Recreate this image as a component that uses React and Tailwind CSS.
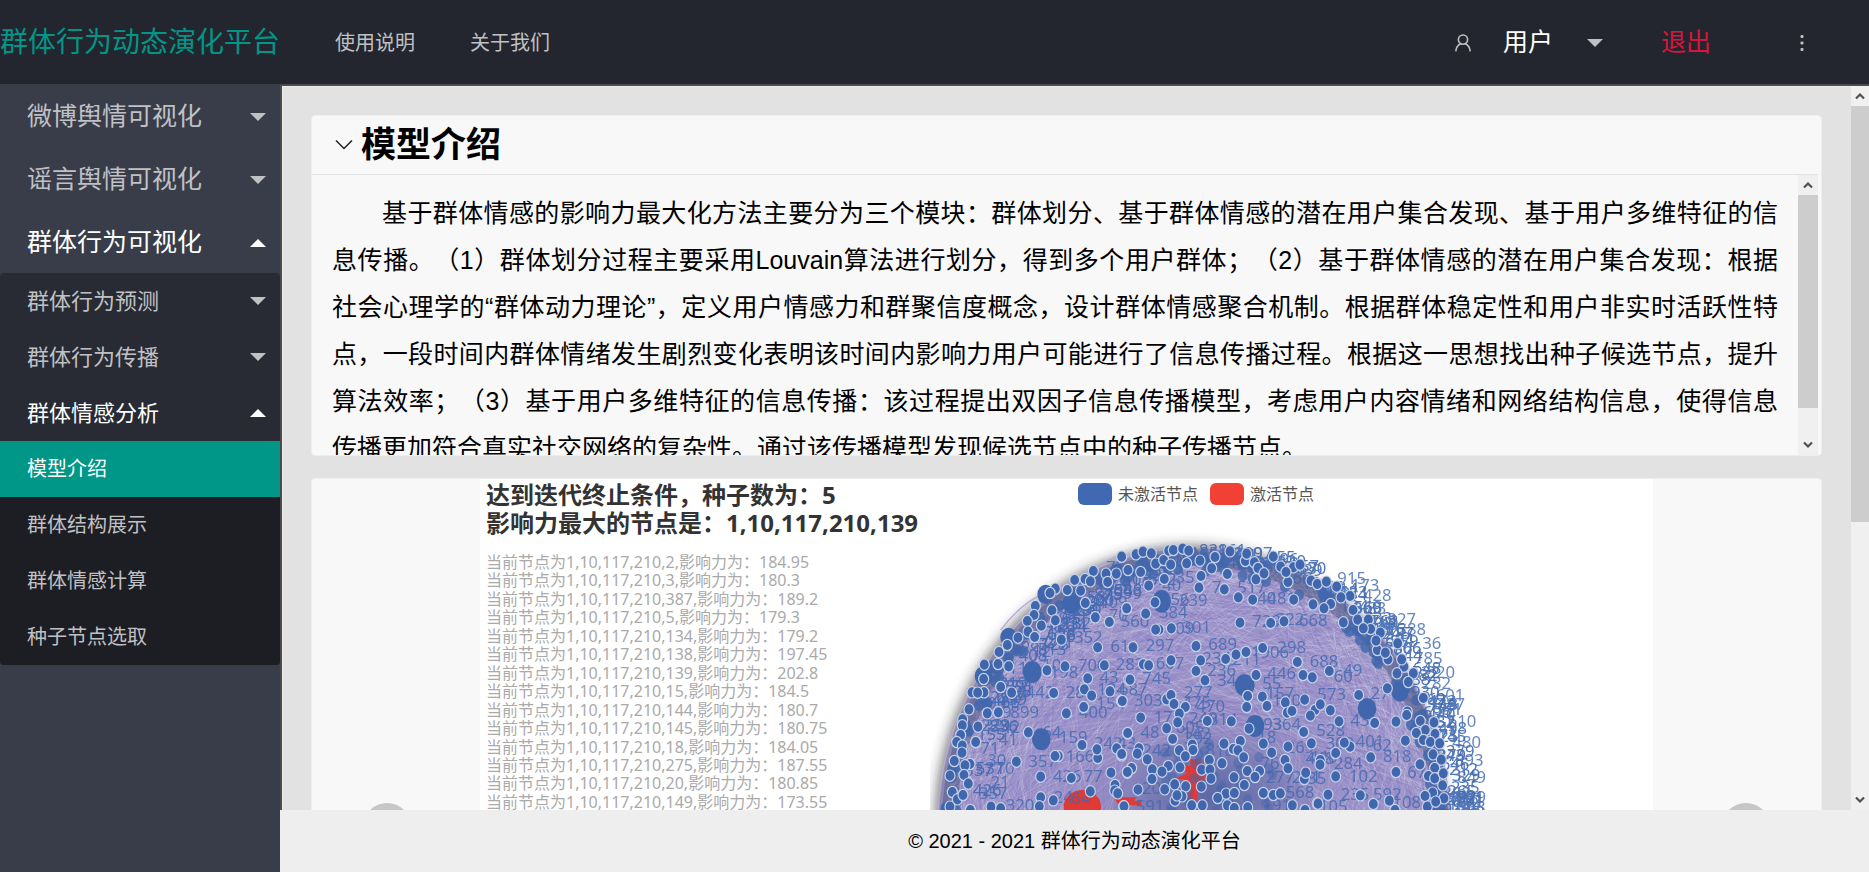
import React from "react";

/* ---------- propagation graph data (three graph units per pixel) ---------- */
const BLOCKS = [
  {
    dx: 0,
    nodes: [[575,80],[490,123],[528,131],[559,131],[533,156],[465,147],[481,154],[434,150],[452,182],[376,176],[412,180],[360,189],[466,219],[496,262],[538,276],[590,235],[366,241],[316,228],[312,255],[292,273],[376,271],[334,287],[294,305],[314,321],[264,323],[232,345],[394,329],[207,366],[163,404],[204,402],[236,409],[161,447],[351,421],[405,409],[503,352],[523,406],[473,445],[463,478],[485,497],[461,531],[540,484],[574,513],[126,487],[162,487],[143,488],[212,471],[245,488],[371,489],[117,538],[172,550],[205,547],[409,550],[98,568],[97,586],[144,590],[137,636],[92,615],[80,636],[97,647],[295,607],[96,668],[73,693],[120,702],[105,706],[259,695],[60,737],[102,735],[115,761],[385,678],[375,678],[456,645],[503,684],[501,658],[575,676],[560,655],[543,728],[592,728],[593,610],[332,740],[424,744],[67,786],[82,808],[99,795],[332,802],[370,811],[481,784],[555,765],[554,782],[563,790],[183,830],[212,835],[328,829],[581,829],[121,840],[60,830],[596,448]],
    hubs: [[347,193,25,29],[424,220,27,30],[236,322,25,29],[161,438,27,30],[307,426,28,33],[334,628,28,33],[50,835,18,20]],
    labels: [["409",550,217],["54",500,217],["352",475,322],["6",422,318],["700",487,405],["198",402,425],["10",365,405],["442",330,487],["80",262,487],["43",537,440],["28",436,487],["899",284,546],["9",230,546],["42",242,590],["41",235,628],["64",365,606],["159",430,622],["357",338,693],["426",412,738],["77",490,738],["400",490,547],["154",542,520],["134",545,476],["61",570,348],["166",450,678],["242",535,640],["21",210,755],["24",400,800],["64",452,805],["72",557,110],["320",270,825],["70",565,256],["804",565,180],["12",335,362],["182",440,280],["284",400,250],["78",370,305],["68",300,340],["30",200,690],["10",225,715],["357",190,790],["96",200,520],["53",190,570],["71",180,655]],
  },
  {
    dx: 570,
    nodes: [[5,80],[48,73],[69,65],[24,120],[62,126],[94,70],[107,101],[131,90],[152,104],[146,62],[160,60],[188,56],[206,62],[200,100],[240,92],[285,81],[275,115],[243,138],[237,173],[322,132],[330,64],[376,93],[380,71],[403,97],[414,114],[408,148],[432,130],[460,80],[482,110],[520,112],[504,156],[498,126],[540,104],[573,152],[592,162],[133,147],[86,167],[105,217],[77,251],[20,235],[355,202],[398,209],[313,178],[521,209],[579,223],[117,299],[107,299],[154,295],[39,352],[228,348],[360,278],[452,279],[492,274],[428,354],[378,366],[348,374],[317,387],[242,391],[228,423],[153,391],[70,403],[86,406],[255,451],[30,449],[532,396],[549,435],[577,442],[408,435],[383,498],[380,531],[427,500],[441,528],[496,517],[554,509],[502,548],[516,543],[585,540],[571,557],[551,606],[140,508],[153,495],[162,522],[196,531],[178,551],[173,577],[140,595],[158,627],[262,573],[334,574],[387,596],[62,563],[23,609],[7,513],[178,661],[217,644],[219,660],[196,679],[312,641],[361,633],[340,657],[354,661],[430,641],[455,668],[504,650],[574,640],[57,655],[52,671],[82,688],[5,672],[371,682],[268,690],[306,700],[495,690],[504,715],[145,708],[180,712],[97,718],[126,725],[35,714],[22,726],[96,747],[134,778],[54,779],[245,719],[270,719],[273,746],[342,742],[382,723],[419,723],[405,741],[553,747],[557,728],[373,765],[197,769],[244,770],[164,763],[165,812],[186,799],[171,796],[318,791],[293,804],[343,789],[430,789],[460,795],[481,790],[215,826],[247,826],[12,829],[322,826],[343,834],[383,832],[517,826],[592,820],[555,840]],
    hubs: [[125,214,28,34],[374,466,30,33],[405,588,28,33]],
    labels: [["297",120,346],["689",308,343],["239",220,210],["56",180,207],["35",195,140],["40",155,165],["7",290,170],["517",395,172],["481",485,205],["40",440,203],["384",160,247],["560",45,272],["301",230,290],["809",180,295],["729",440,273],["322",510,268],["668",580,270],["283",30,402],["607",150,400],["234",290,385],["211",380,388],["298",515,350],["1906",450,365],["236",305,420],["34",320,450],["745",110,443],["446",485,430],["55",455,458],["303",85,510],["687",40,478],["277",235,487],["475",230,515],["470",272,527],["249",250,565],["17",130,560],["814",310,568],["93",458,582],["364",500,582],["48",90,605],["142",230,610],["120",500,510],["157",480,490],["605",210,590],["392",235,625],["43",20,640],["242",110,660],["18",440,620],["818",300,660],["269",540,650],["448",600,685],["291",560,740],["277",480,740],["591",90,828],["568",540,785],["191",470,825],["20",95,775],["76",450,700],["35",590,745]],
  },
  {
    dx: 1110,
    nodes: [[79,155],[110,170],[150,198],[123,202],[92,222],[72,235],[130,277],[159,240],[173,269],[205,269],[212,297],[190,295],[241,308],[232,360],[228,332],[264,388],[256,368],[293,340],[312,410],[305,388],[291,430],[340,430],[325,456],[262,475],[370,504],[176,495],[88,423],[61,523],[91,541],[117,574],[224,579],[288,575],[322,545],[320,555],[361,573],[402,577],[376,600],[349,609],[405,612],[370,630],[316,632],[391,636],[419,640],[150,650],[133,638],[107,669],[212,682],[61,690],[60,704],[399,673],[424,689],[360,703],[288,726],[107,739],[404,714],[385,738],[404,745],[430,730],[428,766],[84,794],[181,796],[220,822],[268,812],[398,788],[375,798],[432,805],[382,830],[54,821],[407,815],[285,840]],
    hubs: [[300,485,26,30],[201,536,28,32]],
    labels: [["818",292,678],["401",210,632],["62",247,645],["102",190,738],["235",165,792],["592",262,792],["284",145,700],["688",72,392],["49",158,420],["60",130,438],["573",95,493],["528",92,600],["43",180,570],["27",240,490],["67",350,725],["440",70,680],["300",120,640],["105",100,828],["108",320,815],["601",450,495],["787",452,522],["610",486,572],["480",500,635],["893",508,690],["849",515,740],["929",515,800],["915",155,145],["173",195,165],["428",232,195],["83",230,235],["327",305,268],["388",335,298],["36",395,338],["785",385,385],["320",422,425],["282",410,458]],
  },
];

const CX = 795, CY = 894, RX = 768, RY = 838;

function makeRandom(seed) {
  let s = seed;
  return () => {
    s = (s * 1664525 + 1013904223) % 4294967296;
    return s / 4294967296;
  };
}
const onRim = (a, k) => [Math.round(CX + Math.cos(a) * RX * k), Math.round(CY + Math.sin(a) * RY * k)];

const rand = makeRandom(77);
const CHORDS = Array.from({ length: 620 }, () => {
  const a = -rand() * Math.PI * 1.2 + 0.3;
  const b = a + (0.6 + rand() * 1.9) * (rand() > 0.5 ? 1 : -1);
  return { p: onRim(a, 0.97), q: onRim(b, 0.97), light: rand() > 0.45 };
});
const RIM_DOTS = Array.from({ length: 110 }, () => onRim(-rand() * Math.PI, 0.92 + rand() * 0.06));
const RIM_LABELS = Array.from({ length: 96 }, () => {
  const a = -rand() * Math.PI * 0.58;
  const [x, y] = onRim(a, 0.95 + rand() * 0.06);
  return { x: x + 58, y, text: String(100 + Math.floor(rand() * 890)) };
});
const LEFT_LABELS = Array.from({ length: 40 }, () => {
  const a = -Math.PI * (0.56 + rand() * 0.44);
  const [x, y] = onRim(a, 0.91 + rand() * 0.05);
  return { x: x + 70, y, text: String(20 + Math.floor(rand() * 890)) };
});
const CORE_DOTS = Array.from({ length: 50 }, () => [
  Math.round(700 + rand() * 330),
  Math.round(640 + rand() * 230),
]);

function Graph() {
  return (
    <svg viewBox="0 0 1710 1800" className="block w-full" role="img" aria-label="节点激活网络图">
      <defs>
        <filter id="soft" x="-20%" y="-20%" width="140%" height="140%">
          <feGaussianBlur stdDeviation="20" />
        </filter>
        <radialGradient id="disc">
          <stop offset="0" stopColor="#8d83bb" />
          <stop offset="0.6" stopColor="#9a91c8" />
          <stop offset="0.9" stopColor="#9c93c8" />
          <stop offset="1" stopColor="#8a88b2" />
        </radialGradient>
        <radialGradient id="core">
          <stop offset="0" stopColor="#4a5f9c" stopOpacity="0.75" />
          <stop offset="1" stopColor="#4a5f9c" stopOpacity="0" />
        </radialGradient>
      </defs>
      <ellipse cx={CX - 14} cy={CY - 6} rx={RX - 6} ry={RY} fill="#2b2c33" opacity="0.75" filter="url(#soft)" />
      <ellipse cx={CX} cy={CY} rx={RX} ry={RY} fill="url(#disc)" />
      <ellipse cx={CX - 4} cy={CY - 4} rx={RX} ry={RY} fill="none" stroke="#b3abd9" strokeWidth="4" />
      <path d="M500 118C530 88 555 76 600 78M212 300C250 250 290 215 330 196" fill="none" stroke="#b3abd9" strokeWidth="4" />
      {CHORDS.map((c, i) => (
        <line
          key={i}
          x1={c.p[0]}
          y1={c.p[1]}
          x2={c.q[0]}
          y2={c.q[1]}
          stroke={c.light ? "#ffffff" : "#7d70bd"}
          strokeOpacity={c.light ? 0.13 : 0.2}
          strokeWidth="3"
        />
      ))}
      <ellipse cx="850" cy="800" rx="330" ry="210" fill="url(#core)" />
      <ellipse cx={CX} cy={CY} rx={RX - 30} ry={RY - 30} fill="none" stroke="#3a4a74" strokeOpacity="0.38" strokeWidth="44" />
      <g fill="#e03a36">
        <ellipse cx="457" cy="830" rx="56" ry="50" />
        <path d="M778 688h36l-4 22 26-14-12 36 16 8-22 10 10 22-24-4-2 44-30-6 6-36-34 8 20-30-28-2 34-16-14-26 26 4z" />
        <path d="M550 802h70l-8 10h22v14h-66z" />
      </g>
      {RIM_DOTS.map(([x, y], i) => (
        <ellipse key={i} cx={x} cy={y} rx="15" ry="17" fill="#4067ad" opacity="0.8" />
      ))}
      {CORE_DOTS.map(([x, y], i) => (
        <ellipse key={i} cx={x} cy={y} rx="14" ry="16" fill="#4067ad" opacity="0.45" />
      ))}
      <g fill="#4169b1" fontSize="50" textAnchor="middle" opacity="0.9">
        {[...RIM_LABELS, ...LEFT_LABELS].map((l, i) => (
          <text key={i} x={l.x} y={l.y + 18}>{l.text}</text>
        ))}
      </g>
      <g fill="#4169b1" fontSize="50" textAnchor="middle" opacity="0.8">
        {BLOCKS.map((b) => b.labels.map(([t, x, y], i) => (
          <text key={`${b.dx}-${i}`} x={x + b.dx} y={y + 18}>{t}</text>
        )))}
      </g>
      {BLOCKS.map((b) => (
        <g key={b.dx}>
          {b.hubs.map(([x, y, rx, ry], i) => (
            <ellipse key={`h${i}`} cx={x + b.dx} cy={y} rx={rx} ry={ry} fill="#4067ae" />
          ))}
          {b.nodes.map(([x, y], i) => (
            <ellipse key={i} cx={x + b.dx} cy={y} rx="15" ry="17" fill="#4067ae" stroke="#c6d2e8" strokeWidth="3.5" />
          ))}
        </g>
      ))}
    </svg>
  );
}

/* ---------- small pieces ---------- */
function Caret({ up }) {
  return (
    <svg viewBox="0 0 16 8" className={up ? "h-2 w-4 fill-white" : "h-2 w-4 fill-[#c0c1c4]"} aria-hidden="true">
      <path d={up ? "M0 8L8 0L16 8Z" : "M0 0L8 8L16 0Z"} />
    </svg>
  );
}

function ScrollArrow({ down }) {
  return (
    <span className="flex h-5 w-full shrink-0 items-center justify-center">
      <svg viewBox="0 0 10 8" className="h-2 w-[10px]" aria-hidden="true">
        <path d={down ? "M1 1.5L5 5.5L9 1.5" : "M1 6.5L5 2.5L9 6.5"} fill="none" stroke="#505050" strokeWidth="2.2" />
      </svg>
    </span>
  );
}

const MENU = ["微博舆情可视化", "谣言舆情可视化"];
const SUBMENU = ["群体行为预测", "群体行为传播"];
const LEAVES = ["群体结构展示", "群体情感计算", "种子节点选取"];

const INTRO = [
  "基于群体情感的影响力最大化方法主要分为三个模块：群体划分、基于群体情感的潜在用户集合发现、基于用户多维特征的信",
  "息传播。（1）群体划分过程主要采用Louvain算法进行划分，得到多个用户群体；（2）基于群体情感的潜在用户集合发现：根据",
  "社会心理学的“群体动力理论”，定义用户情感力和群聚信度概念，设计群体情感聚合机制。根据群体稳定性和用户非实时活跃性特",
  "点，一段时间内群体情绪发生剧烈变化表明该时间内影响力用户可能进行了信息传播过程。根据这一思想找出种子候选节点，提升",
  "算法效率；（3）基于用户多维特征的信息传播：该过程提出双因子信息传播模型，考虑用户内容情绪和网络结构信息，使得信息",
];

const STEPS = [
  ["2", "184.95"],
  ["3", "180.3"],
  ["387", "189.2"],
  ["5", "179.3"],
  ["134", "179.2"],
  ["138", "197.45"],
  ["139", "202.8"],
  ["15", "184.5"],
  ["144", "180.7"],
  ["145", "180.75"],
  ["18", "184.05"],
  ["275", "187.55"],
  ["20", "180.85"],
  ["149", "173.55"],
];

function Header() {
  return (
    <header className="flex h-[84px] shrink-0 items-center bg-[#23262e] pt-0.5 text-[#c0c1c3]">
      <a href="#home" className="w-[280px] shrink-0 whitespace-nowrap text-[28px] leading-[42px] text-[#009688]">
        群体行为动态演化平台
      </a>
      <nav className="flex gap-[55px] pl-[55px] text-xl">
        <a href="#help">使用说明</a>
        <a href="#about">关于我们</a>
      </nav>
      <div className="ml-auto flex items-center pr-[65px] text-[25px]">
        <button type="button" className="flex items-center">
          <svg viewBox="0 0 16 18" className="mr-8 h-[18px] w-4" fill="none" stroke="#c0c1c3" strokeWidth="1.6" aria-hidden="true">
            <circle cx="8" cy="5.6" r="4.6" />
            <path d="M0.8 17.4C1 13.6 3 11 5.8 9.8M15.2 17.4C15 13.6 13 11 10.2 9.8" />
          </svg>
          <span className="mr-[34px] text-white">用户</span>
          <Caret />
        </button>
        <a href="#logout" className="ml-[58px] text-[#dc143c]">退出</a>
        <button type="button" aria-label="更多" className="ml-[89px]">
          <svg viewBox="0 0 4 18" className="h-[18px] w-1 fill-[#c0c1c3]" aria-hidden="true">
            <rect x="0.5" y="1" width="3" height="3" rx="1" />
            <rect x="0.5" y="7.5" width="3" height="3" rx="1" />
            <rect x="0.5" y="14" width="3" height="3" rx="1" />
          </svg>
        </button>
      </div>
    </header>
  );
}

function Sidebar() {
  return (
    <aside className="w-[280px] shrink-0 bg-[#393d49] text-[#c0c1c4]">
      <nav>
        {MENU.map((m) => (
          <button key={m} type="button" className="flex h-[63px] w-full items-center justify-between pl-[27px] pr-[14px] pt-0.5 text-[25px]">
            {m}
            <Caret />
          </button>
        ))}
        <button type="button" className="flex h-[63px] w-full items-center justify-between pl-[27px] pr-[14px] pt-0.5 text-[25px] text-white">
          群体行为可视化
          <Caret up />
        </button>
        <div className="overflow-hidden rounded-sm bg-[#282b33]">
          {SUBMENU.map((m) => (
            <button key={m} type="button" className="flex h-14 w-full items-center justify-between pl-[27px] pr-[14px] text-[22px]">
              {m}
              <Caret />
            </button>
          ))}
          <button type="button" className="flex h-14 w-full items-center justify-between pl-[27px] pr-[14px] text-[22px] text-white">
            群体情感分析
            <Caret up />
          </button>
          <div className="bg-[#1d1e23] text-xl">
            <a href="#model" className="flex h-14 items-center bg-[#009688] pl-[27px] text-white">模型介绍</a>
            {LEAVES.map((m) => (
              <a key={m} href="#leaf" className="flex h-14 items-center pl-[27px]">{m}</a>
            ))}
          </div>
        </div>
      </nav>
    </aside>
  );
}

function IntroCard() {
  return (
    <section className="rounded-sm border border-[#eeeeee] bg-[#f8f8f8] pr-[3px]">
      <h2 className="border-b border-[#e3e3e3] text-[35px] font-bold leading-[58px] text-black">
        <button type="button" className="flex items-center gap-2 pl-[23px]">
          <svg viewBox="0 0 18 12" className="h-3 w-[18px]" fill="none" stroke="#222" strokeWidth="1.5" aria-hidden="true">
            <path d="M1 1.5L9 9.5L17 1.5" />
          </svg>
          模型介绍
        </button>
      </h2>
      <div className="flex h-[280px]">
        <div className="h-full min-w-0 flex-1 overflow-hidden px-5 pt-[15px]">
          <p className="text-[25px] leading-[47px] text-black [text-spacing-trim:space-all]">
            {INTRO.map((line) => (
              <span key={line} className="block text-justify [text-align-last:justify] first:indent-[50px]">{line}</span>
            ))}
            传播更加符合真实社交网络的复杂性。通过该传播模型发现候选节点中的种子传播节点。
          </p>
        </div>
        <div className="flex w-5 shrink-0 flex-col bg-[#f0f0f0]" aria-hidden="true">
          <ScrollArrow />
          <span className="h-[213px] bg-[#cdcdcd]" />
          <span className="flex-1" />
          <ScrollArrow down />
        </div>
      </div>
    </section>
  );
}

function ChartCard() {
  return (
    <section className="relative flex h-[652px] shrink-0 justify-center overflow-hidden rounded-sm border border-[#eeeeee] bg-[#f8f8f8]">
      <div className="flex w-full max-w-[1173px] bg-white font-['Noto_Sans','Noto_Sans_CJK_SC',sans-serif]">
        <div className="w-[450px] shrink-0 whitespace-nowrap pl-[6px] pt-[2px]">
          <h3 className="text-2xl font-bold leading-7 text-[#333]">
            达到迭代终止条件，种子数为：5
            <br />
            影响力最大的节点是：1,10,117,210,139
          </h3>
          <ul className="mt-4 flex h-[258px] flex-col justify-between text-base leading-[18px] text-[#aaa]">
            {STEPS.map(([n, v]) => (
              <li key={n}>当前节点为1,10,117,210,{n},影响力为：{v}</li>
            ))}
          </ul>
        </div>
        <div className="w-[570px] shrink-0">
          <div className="flex h-[51px] items-start gap-3 pl-[148px] pt-1 text-base leading-[22px] text-[#555]">
            <span className="flex items-center gap-[6px]">
              <i className="h-[22px] w-[34px] rounded-md bg-[#4169b1]" />
              未激活节点
            </span>
            <span className="flex items-center gap-[6px]">
              <i className="h-[22px] w-[34px] rounded-md bg-[#f04134]" />
              激活节点
            </span>
          </div>
          <Graph />
        </div>
      </div>
      <button type="button" aria-label="上一张" className="absolute left-[51px] top-[324px] size-12 rounded-full bg-[#c6c6c6] text-2xl text-white">‹</button>
      <button type="button" aria-label="下一张" className="absolute right-[51px] top-[324px] size-12 rounded-full bg-[#c6c6c6] text-2xl text-white">›</button>
    </section>
  );
}

export default function App() {
  return (
    <div className="flex h-screen flex-col overflow-hidden bg-[#eeeeee] font-['Liberation_Sans','Noto_Sans_CJK_SC',sans-serif]">
      <Header />
      <div className="flex min-h-0 flex-1">
        <Sidebar />
        <div className="flex min-w-0 flex-1 flex-col">
          <div className="flex min-h-0 flex-1 border-l-2 border-t-2 border-[#4c4b4a]">
            <main className="flex min-w-0 flex-1 flex-col gap-[22px] overflow-hidden border-l border-t border-[#ececec] bg-[#e2e2e2] pl-7 pr-[29px] pt-7">
              <IntroCard />
              <ChartCard />
            </main>
            <div className="flex w-[18px] shrink-0 flex-col bg-[#f0f0f0]" aria-hidden="true">
              <ScrollArrow />
              <span className="h-[416px] bg-[#cdcdcd]" />
              <span className="flex-1" />
              <ScrollArrow down />
            </div>
          </div>
          <footer className="flex h-[62px] shrink-0 items-center justify-center bg-[#eeeeee] text-xl text-black">
            © 2021 - 2021 群体行为动态演化平台
          </footer>
        </div>
      </div>
    </div>
  );
}
